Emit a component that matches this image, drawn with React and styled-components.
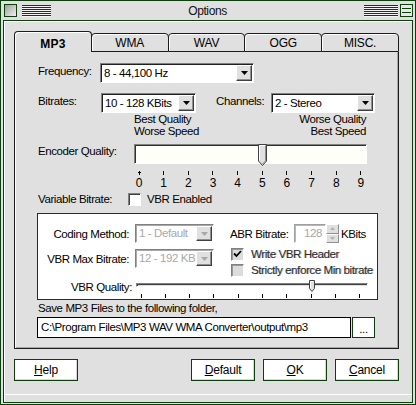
import React from "react";
import styled, { createGlobalStyle } from "styled-components";

const GREEN = "#0c3f0c";
const FACE = "#e0e0e0";

const GlobalStyle = createGlobalStyle`
  html, body { margin: 0; padding: 0; background: ${FACE}; }
  body {
    font-family: "Liberation Sans", Arial, sans-serif;
    font-size: 11.5px;
    letter-spacing: -0.4px;
    color: #000;
  }
  * { box-sizing: border-box; }
`;

const Window = styled.div`
  width: 416px;
  height: 405px;
  border: 1px solid ${GREEN};
  background: ${FACE};
  padding: 0 2px 1px;
  display: flex;
  flex-direction: column;
`;

const TitleBar = styled.div`
  height: 19px;
  display: flex;
  align-items: center;
  padding: 0 0 0 1px;
`;

const Stripes = styled.span`
  width: ${(p) => p.$w}px;
  height: 12px;
  margin: 0 ${(p) => p.$mr || 0}px 0 ${(p) => p.$ml || 0}px;
  background: repeating-linear-gradient(
    to bottom,
    ${GREEN} 0 1px,
    #f4f4f4 1px 2px
  );
`;

const Title = styled.span`
  flex: 1;
  text-align: center;
  font-size: 12px;
  color: #111;
`;

const Client = styled.div`
  flex: 1;
  border: 1px solid ${GREEN};
  box-shadow: inset 1px 1px 0 #fff, inset 0 -7px 0 ${FACE}, inset 0 -8px 0 #fff;
  padding: 10px 13px 0 10px;
  display: flex;
  flex-direction: column;
`;

const TabStrip = styled.div`
  display: flex;
  align-items: flex-end;
  height: 21px;
`;

const Tab = styled.div`
  position: relative;
  flex: 1;
  height: ${(p) => (p.$active ? 21 : 19)}px;
  border: 1px solid #1c1c1c;
  border-bottom: ${(p) => (p.$active ? "none" : "1px solid #1c1c1c")};
  border-radius: 4px 4px 0 0;
  background: ${FACE};
  box-shadow: inset 1px 1px 0 #fff;
  display: flex;
  align-items: center;
  justify-content: center;
  padding-top: ${(p) => (p.$active ? 3 : 0)}px;
  font-size: 12px;
  letter-spacing: ${(p) => (p.$active ? "0.2px" : "-0.2px")};
  font-weight: ${(p) => (p.$active ? "bold" : "normal")};
  z-index: ${(p) => (p.$active ? 2 : 1)};
  & + & { margin-left: -1px; }
`;

const Panel = styled.div`
  height: 297px;
  border: 1px solid #1c1c1c;
  border-top: none;
  box-shadow: inset 1px 0 0 #fff, inset -1px -1px 0 #a8a8a8;
  padding: 11px 0 0 23px;
  display: flex;
  flex-direction: column;
`;

const Row = styled.div`
  display: flex;
  align-items: flex-start;
  height: ${(p) => p.$h}px;
  margin-top: ${(p) => p.$mt || 0}px;
`;

const Label = styled.span`
  flex: none;
  width: ${(p) => (p.$w ? `${p.$w}px` : "auto")};
  margin-right: ${(p) => p.$mr || 0}px;
  text-align: ${(p) => (p.$right ? "right" : "left")};
  line-height: ${(p) => p.$lh || 16}px;
  white-space: nowrap;
  color: ${(p) => (p.$dim ? "#2a2a2a" : "#000")};
  text-shadow: ${(p) => (p.$dim ? "1px 0 0 #c4c4c4" : "none")};
`;

const ComboBox = styled.div`
  flex: none;
  width: ${(p) => p.$w}px;
  height: ${(p) => p.$h}px;
  background: #fff;
  border: 1px solid;
  border-color: #808080 #fff #fff #808080;
  box-shadow: inset 1px 1px 0 ${(p) => (p.$disabled ? "#a8a8a8" : "#202020")};
  display: flex;
  align-items: center;
  padding: 1px 1px 1px 3px;
  color: ${(p) => (p.$disabled ? "#a8a8a8" : "#000")};
`;

const ComboText = styled.span`
  flex: 1;
  white-space: nowrap;
  overflow: hidden;
  line-height: 15px;
`;

const DropButton = styled.span`
  flex: none;
  width: 16px;
  height: 100%;
  background: ${FACE};
  border: 1px solid;
  border-color: #fff #404040 #404040 #fff;
  box-shadow: inset -1px -1px 0 #909090;
  display: flex;
  align-items: center;
  justify-content: center;
`;

const Captions = styled.div`
  display: flex;
  justify-content: space-between;
  width: 233px;
  margin-left: 96px;
  height: 24px;
  line-height: 12px;
`;

const Caption = styled.div`
  text-align: ${(p) => (p.$right ? "right" : "left")};
  padding-right: ${(p) => (p.$right ? 1 : 0)}px;
`;

const SliderField = styled.div`
  position: relative;
  width: 233px;
  height: 20px;
  background: #fffffa;
  border: 1px solid;
  border-color: #808080 #fff #fff #808080;
  box-shadow: inset 1px 1px 0 #303030;
`;

const ThumbHolder = styled.span`
  position: absolute;
  top: ${(p) => p.$top}px;
  left: ${(p) => p.$left}px;
  line-height: 0;
`;

const TickScale = styled.div`
  display: flex;
  justify-content: space-between;
  width: ${(p) => p.$w}px;
  margin: ${(p) => p.$mt}px 0 0 ${(p) => p.$ml}px;
`;

const TickItem = styled.div`
  width: 10px;
  display: flex;
  flex-direction: column;
  align-items: center;
`;

const TickMark = styled.span`
  width: 1px;
  height: ${(p) => p.$h}px;
  background: #000;
`;

const TickNum = styled.span`
  margin-top: 1px;
  line-height: 14px;
  font-size: 12px;
  letter-spacing: 0;
`;

const CheckBox = styled.span`
  flex: none;
  width: 13px;
  height: 13px;
  background: ${(p) => (p.$disabled ? "#dcdcdc" : "#fff")};
  border: 1px solid;
  border-color: #808080 #fff #fff #808080;
  box-shadow: inset 1px 1px 0 ${(p) => (p.$disabled ? "#9a9a9a" : "#404040")};
  display: flex;
  align-items: center;
  justify-content: center;
  margin-top: ${(p) => p.$mt || 0}px;
`;

const GroupBox = styled.div`
  width: 341px;
  height: 87px;
  margin: 7px 0 0 -1px;
  border: 1px solid ${GREEN};
  background: #fff;
  overflow: hidden;
  padding-top: 10px;
  display: flex;
  flex-direction: column;
`;

const GroupTop = styled.div`
  display: flex;
  align-items: flex-start;
`;

const Column = styled.div`
  display: flex;
  flex-direction: column;
  gap: ${(p) => p.$gap || 0}px;
  margin-left: ${(p) => p.$ml || 0}px;
`;

const FieldRow = styled.div`
  display: flex;
  align-items: center;
  height: ${(p) => p.$h || 19}px;
  margin-top: ${(p) => p.$mt || 0}px;
  margin-left: ${(p) => p.$ml || 0}px;
`;

const SpinInput = styled.span`
  width: 32px;
  height: 19px;
  background: #fff;
  border: 1px solid;
  border-color: #a0a0a0 #fff #fff #a0a0a0;
  box-shadow: inset 1px 1px 0 #b8b8b8;
  color: #a8a8a8;
  text-align: right;
  padding-right: 3px;
  line-height: 17px;
`;

const SpinButtons = styled.span`
  width: 13px;
  height: 19px;
  display: flex;
  flex-direction: column;
  margin-right: 2px;
`;

const SpinHalf = styled.span`
  flex: 1;
  background: ${FACE};
  border: 1px solid;
  border-color: #fff #909090 #909090 #fff;
  display: flex;
  align-items: center;
  justify-content: center;
`;

const QualityRow = styled.div`
  display: flex;
  align-items: flex-start;
  margin-top: 2px;
  height: 20px;
`;

const QualityTrack = styled.div`
  position: relative;
  width: 232px;
  padding-top: 4px;
`;

const Groove = styled.div`
  height: 4px;
  border: 1px solid;
  border-color: #808080 #fff #fff #808080;
  box-shadow: inset 1px 1px 0 #404040;
  background: ${FACE};
`;

const PathRow = styled.div`
  display: flex;
  margin: 2px 0 0 -1px;
  height: 21px;
  gap: 1px;
`;

const PathInput = styled.div`
  width: 314px;
  border: 1px solid #000;
  background: #fff;
  padding: 0 3px;
  line-height: 19px;
  white-space: nowrap;
  overflow: hidden;
`;

const BrowseButton = styled.div`
  width: 23px;
  border: 1px solid ${GREEN};
  background: #fff;
  text-align: center;
  line-height: 22px;
`;

const ButtonRow = styled.div`
  display: flex;
  margin-top: 10px;
  gap: 8px;
`;

const Button = styled.div`
  width: 64px;
  height: 22px;
  border: 1px solid ${GREEN};
  background: #fff;
  box-shadow: inset -1px -1px 0 #d8d8d8;
  display: flex;
  align-items: center;
  justify-content: center;
  font-size: 12px;
  letter-spacing: -0.2px;
  margin-left: ${(p) => (p.$push ? "auto" : "0")};
  u { text-decoration: underline; }
`;

const Arrow = ({ color = "#000" }) => (
  <svg width="7" height="4" viewBox="0 0 7 4">
    <path d="M0 0H7L3.5 4Z" fill={color} />
  </svg>
);

const SmallArrow = ({ up }) => (
  <svg width="5" height="3" viewBox="0 0 5 3">
    <path d={up ? "M0 3H5L2.5 0Z" : "M0 0H5L2.5 3Z"} fill="#b0b0b0" />
  </svg>
);

const Combo = ({ w, h = 20, value, disabled }) => (
  <ComboBox $w={w} $h={h} $disabled={disabled}>
    <ComboText>{value}</ComboText>
    <DropButton>
      <Arrow color={disabled ? "#a8a8a8" : "#000"} />
    </DropButton>
  </ComboBox>
);

const BigThumb = () => (
  <svg width="9" height="22" viewBox="0 0 9 22">
    <path d="M0.5 0.5H8.5V17L4.5 21.5L0.5 17Z" fill={FACE} stroke="#404040" />
    <path d="M1.5 16.5V1.5H7.5" fill="none" stroke="#fff" />
    <path d="M7.5 1.5V16.8L4.5 20" fill="none" stroke="#909090" />
  </svg>
);

const SmallThumb = () => (
  <svg width="6" height="12" viewBox="0 0 6 12">
    <path d="M0.5 0.5H5.5V8.5L3 11.5L0.5 8.5Z" fill={FACE} stroke="#404040" />
    <path d="M1.5 8V1.5H4.5" fill="none" stroke="#fff" />
  </svg>
);

const Check = () => (
  <svg width="9" height="8" viewBox="0 0 9 8">
    <path d="M1 3.5L3.5 6L8 1" fill="none" stroke="#000" strokeWidth="1.8" />
  </svg>
);

const tabs = ["MP3", "WMA", "WAV", "OGG", "MISC."];
const digits = [0, 1, 2, 3, 4, 5, 6, 7, 8, 9];

export default function App() {
  return (
    <>
      <GlobalStyle />
      <Window>
        <TitleBar>
          <svg width="13" height="13" viewBox="0 0 13 13">
            <defs>
              <linearGradient id="ico" x1="0" y1="0" x2="1" y2="1">
                <stop offset="0" stopColor="#9a9a9a" />
                <stop offset="1" stopColor="#f4f4f4" />
              </linearGradient>
            </defs>
            <rect x="0.5" y="0.5" width="12" height="12" fill="url(#ico)" stroke={GREEN} />
          </svg>
          <Stripes $w={29} $ml={5} />
          <Title>Options</Title>
          <Stripes $w={34} $mr={2} />
          <svg width="13" height="13" viewBox="0 0 13 13">
            <rect x="0.5" y="0.5" width="12" height="12" fill="#e8e8e8" stroke={GREEN} />
            <path d="M2 4.5H11M2 8.5H11" stroke={GREEN} />
          </svg>
        </TitleBar>

        <Client>
          <TabStrip>
            {tabs.map((t, i) => (
              <Tab key={t} $active={i === 0}>{t}</Tab>
            ))}
          </TabStrip>

          <Panel>
            <Row $h={20}>
              <Label $w={62}>Frequency:</Label>
              <Combo w={154} value="8 - 44,100 Hz" />
            </Row>
            <Row $h={20} $mt={10}>
              <Label $w={63}>Bitrates:</Label>
              <Combo w={95} value="10 - 128 KBits" />
              <Label $w={55} style={{ marginLeft: 20 }}>Channels:</Label>
              <Combo w={104} value="2 - Stereo" />
            </Row>

            <Captions>
              <Caption>Best Quality<br />Worse Speed</Caption>
              <Caption $right>Worse Quality<br />Best Speed</Caption>
            </Captions>

            <Row $h={20} $mt={7}>
              <Label $w={96} $lh={14}>Encoder Quality:</Label>
              <SliderField>
                <ThumbHolder $top={-1} $left={123}>
                  <BigThumb />
                </ThumbHolder>
              </SliderField>
            </Row>

            <TickScale $w={232} $ml={96} $mt={7}>
              {digits.map((d) => (
                <TickItem key={d}>
                  {d === 0 ? (
                    <svg width="3" height="4" viewBox="0 0 3 4">
                      <path d="M1 0H2V1H3V2H2V4H1V2H0V1H1Z" fill="#000" />
                    </svg>
                  ) : (
                    <TickMark $h={4} />
                  )}
                  <TickNum>{d}</TickNum>
                </TickItem>
              ))}
            </TickScale>

            <Row $h={14} $mt={2}>
              <Label $w={90} $lh={14}>Variable Bitrate:</Label>
              <CheckBox $mt={1} />
              <Label $lh={14} style={{ marginLeft: 6 }}>VBR Enabled</Label>
            </Row>

            <GroupBox>
              <GroupTop>
                <Column $gap={6}>
                  <FieldRow>
                    <Label $w={91} $mr={6} $right>Coding Method:</Label>
                    <Combo w={79} h={19} value="1 - Default" disabled />
                  </FieldRow>
                  <FieldRow>
                    <Label $w={91} $mr={6} $right>VBR Max Bitrate:</Label>
                    <Combo w={79} h={19} value="12 - 192 KB" disabled />
                  </FieldRow>
                </Column>
                <Column $ml={16}>
                  <FieldRow>
                    <Label $w={64}>ABR Bitrate:</Label>
                    <SpinInput>128</SpinInput>
                    <SpinButtons>
                      <SpinHalf><SmallArrow up /></SpinHalf>
                      <SpinHalf><SmallArrow /></SpinHalf>
                    </SpinButtons>
                    <Label>KBits</Label>
                  </FieldRow>
                  <FieldRow $h={14} $mt={4} $ml={1}>
                    <CheckBox $disabled><Check /></CheckBox>
                    <Label $dim $lh={14} style={{ marginLeft: 7 }}>Write VBR Header</Label>
                  </FieldRow>
                  <FieldRow $h={14} $mt={2} $ml={1}>
                    <CheckBox $disabled />
                    <Label $dim $lh={14} style={{ marginLeft: 7 }}>Strictly enforce Min bitrate</Label>
                  </FieldRow>
                </Column>
              </GroupTop>

              <QualityRow>
                <Label $w={94} $mr={4} $right>VBR Quality:</Label>
                <QualityTrack>
                  <Groove />
                  <ThumbHolder $top={1} $left={173}>
                    <SmallThumb />
                  </ThumbHolder>
                  <TickScale $w={229} $ml={0} $mt={7}>
                    {digits.map((d) => (
                      <TickItem key={d}>
                        <TickMark $h={4} />
                      </TickItem>
                    ))}
                  </TickScale>
                </QualityTrack>
              </QualityRow>
            </GroupBox>

            <Row $h={13} $mt={2}>
              <Label $lh={13}>Save MP3 Files to the following folder,</Label>
            </Row>
            <PathRow>
              <PathInput>C:\Program Files\MP3 WAV WMA Converter\output\mp3</PathInput>
              <BrowseButton>...</BrowseButton>
            </PathRow>
          </Panel>

          <ButtonRow>
            <Button><span><u>H</u>elp</span></Button>
            <Button $push><span><u>D</u>efault</span></Button>
            <Button><span><u>O</u>K</span></Button>
            <Button><span><u>C</u>ancel</span></Button>
          </ButtonRow>
        </Client>
      </Window>
    </>
  );
}
